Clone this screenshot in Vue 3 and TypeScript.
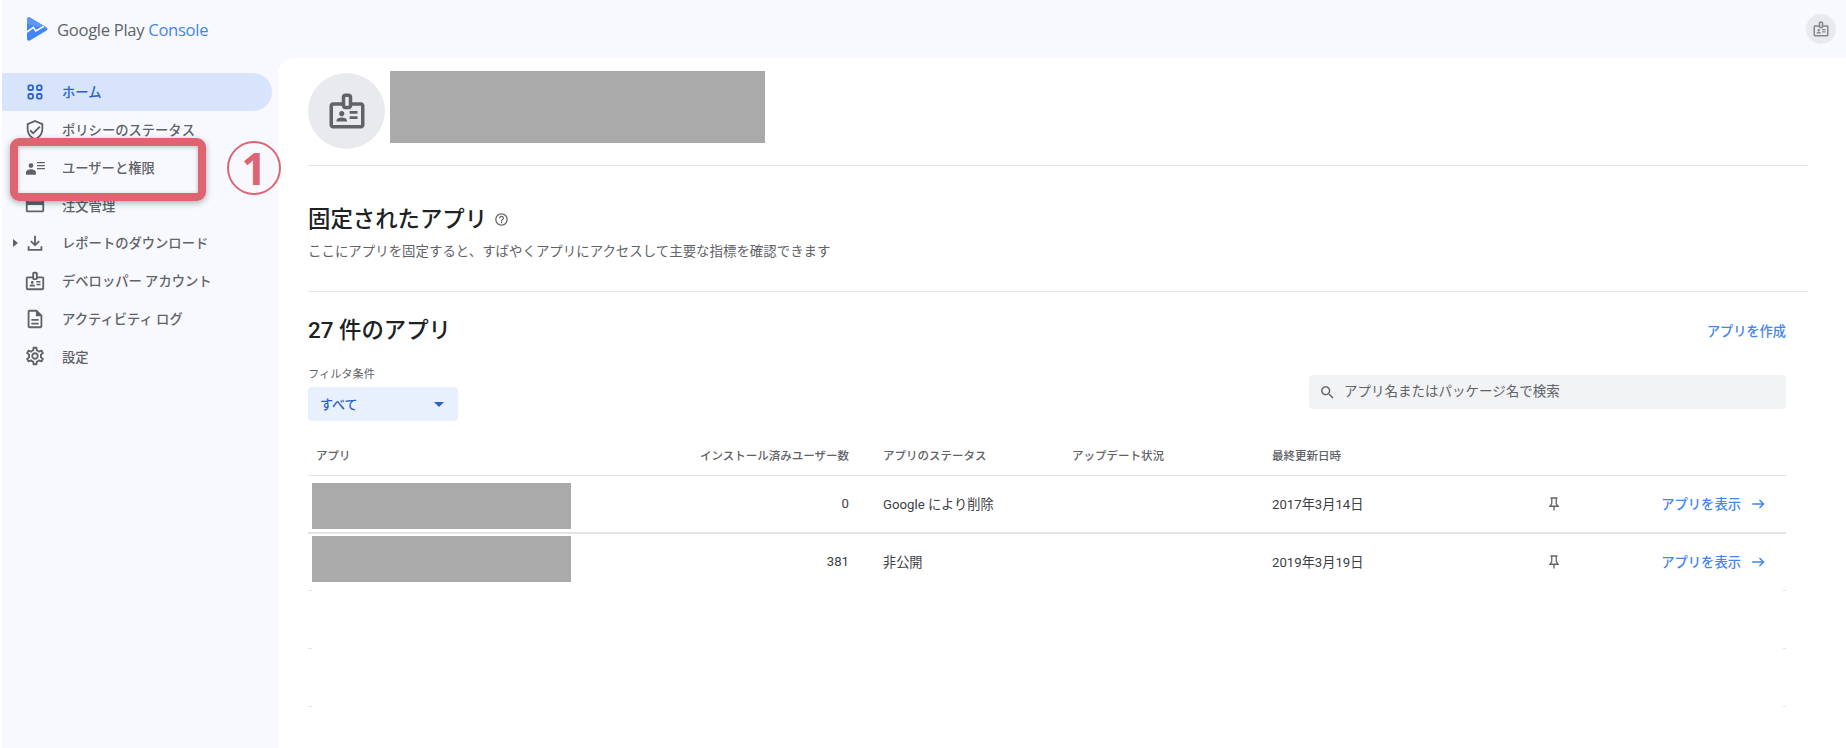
<script setup lang="ts">
interface NavItem { label: string; icon: string; active?: boolean; caret?: boolean }
const nav: NavItem[] = [
  { label: 'ホーム', icon: 'grid', active: true },
  { label: 'ポリシーのステータス', icon: 'shield' },
  { label: 'ユーザーと権限', icon: 'people' },
  { label: '注文管理', icon: 'card' },
  { label: 'レポートのダウンロード', icon: 'download', caret: true },
  { label: 'デベロッパー アカウント', icon: 'badge' },
  { label: 'アクティビティ ログ', icon: 'doc' },
  { label: '設定', icon: 'gear' },
]
const rows = [
  { installs: '0', status: 'Google により削除', date: '2017年3月14日' },
  { installs: '381', status: '非公開', date: '2019年3月19日' },
]
const badgePath = 'M20 7h-5V4c0-1.1-.9-2-2-2h-2c-1.1 0-2 .9-2 2v3H4c-1.1 0-2 .9-2 2v11c0 1.1.9 2 2 2h16c1.1 0 2-.9 2-2V9c0-1.1-.9-2-2-2zM11 4h2v5h-2V4zm9 16H4V9h5c0 1.1.9 2 2 2h2c1.1 0 2-.9 2-2h5v11zM9 15c.83 0 1.5-.67 1.5-1.5S9.83 12 9 12s-1.5.67-1.5 1.5S8.17 15 9 15zm2.08 1.18c-.64-.28-1.34-.43-2.08-.43s-1.44.15-2.08.43C6.36 16.42 6 16.96 6 17.57V18h6v-.43c0-.61-.36-1.15-.92-1.39zM13.5 13.5H18V12h-4.5zM13.5 16.5H18V15h-4.5z'
const paths: Record<string, string> = {
  shield: 'M12 1 3 5v6c0 5.55 3.84 10.74 9 12 5.16-1.26 9-6.45 9-12V5l-9-4zm7 10c0 4.52-2.98 8.69-7 9.93-4.02-1.24-7-5.41-7-9.93V6.3l7-3.11 7 3.11V11zm-11.59.59L6 13l4 4 8-8-1.41-1.42L10 14.17z',
  card: 'M20 4H4c-1.11 0-1.99.89-1.99 2L2 18c0 1.11.89 2 2 2h16c1.11 0 2-.89 2-2V6c0-1.11-.89-2-2-2zm0 14H4v-6h16v6zm0-10H4V6h16v2z',
  badge: badgePath,
  doc: 'M8 16h8v2H8zm0-4h8v2H8zm6-10H6c-1.1 0-2 .9-2 2v16c0 1.1.9 2 2 2h12c1.1 0 2-.9 2-2V8l-6-6zm4 18H6V4h7v5h5v11z',
  gear: 'M19.43 12.98c.04-.32.07-.64.07-.98 0-.34-.03-.66-.07-.98l2.11-1.65c.19-.15.24-.42.12-.64l-2-3.46c-.09-.16-.26-.25-.44-.25-.06 0-.12.01-.17.03l-2.49 1c-.52-.4-1.08-.73-1.69-.98l-.38-2.65C14.46 2.18 14.25 2 14 2h-4c-.25 0-.46.18-.49.42l-.38 2.65c-.61.25-1.17.59-1.69.98l-2.49-1c-.06-.02-.12-.03-.18-.03-.17 0-.34.09-.43.25l-2 3.46c-.13.22-.07.49.12.64l2.11 1.65c-.04.32-.07.65-.07.98 0 .33.03.66.07.98l-2.11 1.65c-.19.15-.24.42-.12.64l2 3.46c.09.16.26.25.44.25.06 0 .12-.01.17-.03l2.49-1c.52.4 1.08.73 1.69.98l.38 2.65c.03.24.24.42.49.42h4c.25 0 .46-.18.49-.42l.38-2.65c.61-.25 1.17-.59 1.69-.98l2.49 1c.06.02.12.03.18.03.17 0 .34-.09.43-.25l2-3.46c.12-.22.07-.49-.12-.64l-2.11-1.65zm-1.98-1.71c.04.31.05.52.05.73 0 .21-.02.43-.05.73l-.14 1.13.89.7 1.08.84-.7 1.21-1.27-.51-1.04-.42-.9.68c-.43.32-.84.56-1.25.73l-1.06.43-.16 1.13-.2 1.35h-1.4l-.19-1.35-.16-1.13-1.06-.43c-.43-.18-.83-.41-1.23-.71l-.91-.7-1.06.43-1.27.51-.7-1.21 1.08-.84.89-.7-.14-1.13c-.03-.31-.05-.54-.05-.74s.02-.43.05-.73l.14-1.13-.89-.7-1.08-.84.7-1.21 1.27.51 1.04.42.9-.68c.43-.32.84-.56 1.25-.73l1.06-.43.16-1.13.2-1.35h1.39l.19 1.35.16 1.13 1.06.43c.43.18.83.41 1.23.71l.91.7 1.06-.43 1.27-.51.7 1.21-1.07.85-.89.7.14 1.13zM12 8c-2.21 0-4 1.79-4 4s1.79 4 4 4 4-1.79 4-4-1.79-4-4-4zm0 6c-1.1 0-2-.9-2-2s.9-2 2-2 2 .9 2 2-.9 2-2 2z',
  people: 'M7.6 13a2.6 2.6 0 1 0 0-5.200 2.6 2.6 0 0 0 0 5.200zM7.6 14.500c-2.400 0-5.400 1.200-5.400 3.200V20.500h10.800v-2.800c0-2-3-3.200-5.400-3.200zM14.200 6.500h8.600v1.400h-8.600zM14.200 9.800h8.600v1.400h-8.600zM14.200 13.100h8.600v1.400h-8.600z',
}
</script>

<template>
  <div class="page">
    <header class="topbar">
      <div class="brand">
        <svg class="logo" viewBox="0 0 22 24" width="22" height="24">
          <path d="M1 2.2C1 .6 2.6-.2 3.9.6l16.6 9.9c1.2.7 1.2 2.4 0 3.1L3.9 23.5C2.6 24.2 1 23.4 1 21.8z" fill="#4285f4" />
          <path d="M1 2.2C1 .6 2.6-.2 3.9.6l16.6 9.9c.5.3.8.7.9 1.2L1 7z" fill="#5e97f6" />
          <path d="M1 15l6.4-4.6 2.4 3.6 8-4.6" fill="none" stroke="#fff" stroke-width="1.6" />
        </svg>
        <span class="brand-text">Google Play <span class="brand-blue">Console</span></span>
      </div>
      <div class="top-avatar">
        <svg viewBox="0 0 24 24" width="18" height="18"><path :d="badgePath" fill="#80868b" /></svg>
      </div>
    </header>

    <div class="body">
      <aside class="sidebar">
        <nav class="nav">
          <a v-for="item in nav" :key="item.label" class="nav-item" :class="{ active: item.active }">
            <span class="caret-slot"><span v-if="item.caret" class="caret"></span></span>
            <svg class="nav-icon" viewBox="0 0 24 24" width="22" height="22">
              <g v-if="item.icon === 'grid'" fill="none" stroke="currentColor" stroke-width="2">
                <rect x="4.8" y="4.8" width="5" height="5" rx="1.4" />
                <rect x="14.2" y="4.8" width="5" height="5" rx="1.4" />
                <rect x="4.8" y="14.2" width="5" height="5" rx="1.4" />
                <rect x="14.2" y="14.2" width="5" height="5" rx="1.4" />
              </g>
              <path v-else-if="item.icon === 'download'" d="M12 4v10M7.5 10l4.500 4.500 4.500-4.500M5 15.500V19.500h14V15.500" fill="none" stroke="currentColor" stroke-width="2" />
              <path v-else :d="paths[item.icon]" fill="currentColor" />
            </svg>
            <span class="nav-label">{{ item.label }}</span>
          </a>
        </nav>
      </aside>

      <main class="main">
        <section class="identity">
          <div class="avatar">
            <svg viewBox="0 0 24 24" width="42" height="42"><path :d="badgePath" fill="#5f6368" /></svg>
          </div>
          <div class="redact redact-title"></div>
        </section>

        <section class="pinned">
          <h2 class="heading">固定されたアプリ
            <svg class="help" viewBox="0 0 24 24" width="15" height="15">
              <path fill="#5f6368" d="M11 18h2v-2h-2v2zm1-16C6.48 2 2 6.48 2 12s4.48 10 10 10 10-4.48 10-10S17.520 2 12 2zm0 18c-4.410 0-8-3.590-8-8s3.590-8 8-8 8 3.590 8 8-3.590 8-8 8zm0-14c-2.210 0-4 1.790-4 4h2c0-1.100.9-2 2-2s2 .9 2 2c0 2-3 1.750-3 5h2c0-2.250 3-2.500 3-5 0-2.210-1.790-4-4-4z" />
            </svg>
          </h2>
          <p class="sub">ここにアプリを固定すると、すばやくアプリにアクセスして主要な指標を確認できます</p>
        </section>

        <section class="apps">
          <div class="apps-head">
            <h2 class="heading">27 件のアプリ</h2>
            <a class="create">アプリを作成</a>
          </div>
          <div class="filters">
            <div>
              <div class="filter-label">フィルタ条件</div>
              <div class="select"><span class="select-text">すべて</span><span class="select-caret"></span></div>
            </div>
            <div class="search">
              <svg viewBox="0 0 24 24" width="17" height="17">
                <path fill="#5f6368" d="M15.5 14h-.79l-.28-.27C15.41 12.59 16 11.11 16 9.5 16 5.91 13.09 3 9.5 3S3 5.91 3 9.5 5.91 16 9.5 16c1.61 0 3.09-.59 4.23-1.57l.27.28v.79l5 4.99L20.49 19l-4.99-5zm-6 0C7.01 14 5 11.99 5 9.5S7.01 5 9.5 5 14 7.01 14 9.5 11.99 14 9.5 14z" />
              </svg>
              <span class="search-text">アプリ名またはパッケージ名で検索</span>
            </div>
          </div>

          <div class="grid-row head">
            <div class="c-app">アプリ</div>
            <div class="c-num">インストール済みユーザー数</div>
            <div class="c-status">アプリのステータス</div>
            <div>アップデート状況</div>
            <div>最終更新日時</div>
            <div></div>
            <div></div>
          </div>
          <div v-for="(row, i) in rows" :key="row.date" class="grid-row app-row" :class="i === 0 ? 'row-first' : 'row-second tick'">
            <div><div class="redact redact-app"></div></div>
            <div class="c-num">{{ row.installs }}</div>
            <div class="c-status">{{ row.status }}</div>
            <div></div>
            <div>{{ row.date }}</div>
            <div class="c-pin">
              <svg viewBox="0 0 20 28" width="10" height="14">
                <path d="M3 2h14M5.500 2v11L2 18.500h16L14.500 13V2M10 18.500V27" fill="none" stroke="#5f6368" stroke-width="2.600" />
              </svg>
            </div>
            <div class="c-link">
              <span>アプリを表示</span>
              <svg viewBox="0 0 24 24" width="14" height="14">
                <path d="M2 12h20M14.500 5l7 7-7 7" fill="none" stroke="#4285f4" stroke-width="2.600" />
              </svg>
            </div>
          </div>
          <div v-for="n in 2" :key="n" class="ghost tick"></div>
        </section>
      </main>
    </div>

    <div class="callout-box"></div>
    <div class="callout-num">1</div>
  </div>
</template>

<style>
html, body { margin: 0; padding: 0; background: #f8f9fe; }
</style>

<style scoped>
.page {
  position: relative;
  width: 1846px;
  height: 748px;
  overflow: hidden;
  box-sizing: border-box;
  border-left: 2px solid #fff;
  background: #f8f9fe;
  font-family: Roboto, "Noto Sans CJK JP", sans-serif;
  color: #3c4043;
}
.topbar {
  height: 58px;
  display: flex;
  align-items: center;
  justify-content: space-between;
  padding: 0 10px 0 24px;
  box-sizing: border-box;
}
.brand { display: flex; align-items: center; gap: 9px; }
.brand-text { font-family: "Open Sans", sans-serif; font-size: 16.6px; color: #5f6368; letter-spacing: -0.3px; }
.brand-blue { color: #4285f4; }
.top-avatar {
  width: 30px; height: 30px; border-radius: 50%; background: #e8eaed;
  display: flex; align-items: center; justify-content: center;
}
.body { display: flex; height: 690px; }
.sidebar { width: 276px; flex: none; padding-top: 15px; box-sizing: border-box; }
.nav { display: flex; flex-direction: column; }
.nav-item {
  height: 37.8px; width: 270px; box-sizing: border-box;
  padding-left: 6px; display: flex; align-items: center;
  font-size: 13.3px; font-weight: 500; color: #5f6368;
  border-radius: 0 19px 19px 0;
}
.nav-label { margin-top: -0.5px; }
.nav-item.active { background: #d7e4fb; color: #2a62cb; }
.caret-slot { width: 14px; margin-right: 2px; display: flex; justify-content: center; }
.caret { width: 0; height: 0; border-left: 5px solid #5f6368; border-top: 4px solid transparent; border-bottom: 4px solid transparent; }
.nav-icon { margin-right: 16px; flex: none; }
.main {
  flex: 1; background: #fff; border-top-left-radius: 16px;
  padding: 0 38px 0 30px; box-sizing: border-box; min-width: 0;
}
.identity {
  height: 108px; box-sizing: border-box; padding-top: 13px;
  display: flex; align-items: flex-start; gap: 5px;
  border-bottom: 1.5px solid #e3e4e6;
}
.avatar {
  width: 77px; height: 76px; margin-top: 2px; border-radius: 50%; background: #e8eaed;
  display: flex; align-items: center; justify-content: center; flex: none;
}
.redact { background: #a9aaa9; }
.redact-title { width: 375px; height: 72px; }
.pinned { height: 126px; box-sizing: border-box; padding-top: 36.5px; border-bottom: 1.5px solid #e3e4e6; }
.heading {
  margin: 0; font-size: 22.4px; line-height: 32px; font-weight: 500; color: #202124;
  display: flex; align-items: center; gap: 7px;
}
.help { margin-top: 2px; }
.sub { margin: 7.5px 0 0; font-size: 13.45px; line-height: 20px; color: #5f6368; }
.apps { padding-top: 21.5px; }
.apps-head { display: flex; justify-content: space-between; align-items: center; padding-right: 22px; }
.create { font-size: 13.2px; font-weight: 500; color: #4285f4; margin-top: 2px; }
.filters { display: flex; justify-content: space-between; align-items: flex-start; padding-right: 22px; margin-top: 21.5px; }
.filter-label { font-size: 11.2px; line-height: 16px; color: #5f6368; }
.select {
  width: 150px; height: 34px; margin-top: 4px; background: #e8f0fe; border-radius: 4px; box-sizing: border-box;
  padding: 0 14px 0 12px; display: flex; align-items: center; justify-content: space-between;
  font-size: 13px; font-weight: 500; color: #2a62cb;
}
.select-text { margin-top: -2px; }
.select-caret { width: 0; height: 0; border-top: 5px solid #2a62cb; border-left: 5px solid transparent; border-right: 5px solid transparent; }
.search {
  width: 477px; height: 34px; margin-top: 8px; background: #f1f3f4; border-radius: 4px; box-sizing: border-box;
  padding-left: 10px; display: flex; align-items: center; gap: 8px;
  font-size: 13.5px; color: #5f6368;
}
.search-text { margin-top: -4px; }
.grid-row {
  display: grid;
  grid-template-columns: 390px 151px 223px 200px 240px 84px 190px;
  width: 1478px; align-items: center; box-sizing: border-box;
}
.head { height: 54.5px; padding-top: 14px; font-size: 11.5px; color: #5f6368; border-bottom: 1.5px solid #dfe1e3; font-weight: 500; }
.c-app { padding-left: 8px; }
.c-num { text-align: right; }
.c-status { padding-left: 34px; }
.app-row { font-size: 13.2px; color: #3c4043; }
.row-first { height: 58.5px; border-bottom: 2px solid #e4e5e6; }
.row-second { height: 57px; padding-bottom: 2px; }
.redact-app { width: 259px; height: 46px; margin-left: 4px; }
.row-first .redact-app { margin-top: 3.5px; }
.row-second .redact-app { margin-bottom: 5px; }
.c-pin { display: flex; justify-content: center; }
.c-link {
  display: flex; align-items: center; justify-content: flex-end; gap: 10px; padding-right: 21px;
  font-size: 13.3px; font-weight: 500; color: #4285f4;
}
.ghost { width: 1478px; height: 58px; }
.tick { position: relative; }
.tick::before, .tick::after { content: ""; position: absolute; bottom: 0; height: 1.5px; background: #e4e5e6; }
.tick::before { left: 0; width: 4px; }
.tick::after { right: 0; width: 3px; }
.callout-box {
  position: absolute; left: 8px; top: 138px; width: 196px; height: 63px; box-sizing: border-box;
  border: 8px solid #de6472; border-radius: 9px;
  box-shadow: 0 2px 6px rgba(0, 0, 0, .3), inset 0 1px 4px rgba(0, 0, 0, .25);
}
.callout-num {
  position: absolute; left: 225px; top: 141px; width: 54px; height: 54px; box-sizing: border-box;
  border: 2.5px solid #de6472; border-radius: 50%;
  display: flex; align-items: center; justify-content: center;
  font-family: "Open Sans", sans-serif; font-size: 44px; font-weight: 700; color: #de6472;
}
</style>
